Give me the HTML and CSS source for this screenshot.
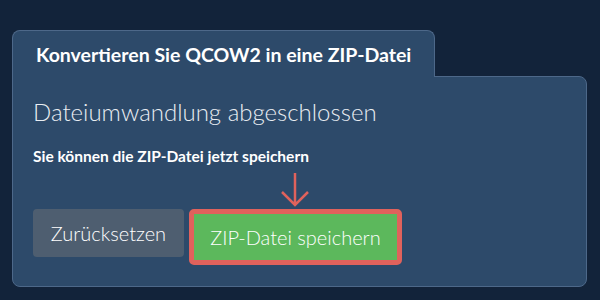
FILE: index.html
```html
<!DOCTYPE html>
<html lang="de">
<head>
    <meta charset="UTF-8">
    <title>QCOW2 zu ZIP</title>
    <link rel="stylesheet" href="styles.css">
</head>
<body>
<div class="box">
    <div class="tab">Konvertieren Sie QCOW2 in eine ZIP-Datei</div>
    <div class="panel">
        <h2 class="done">Dateiumwandlung abgeschlossen</h2>
        <p class="hint">Sie können die ZIP-Datei jetzt speichern</p>
        <div class="btns">
            <button class="btn reset">Zurücksetzen</button>
            <div class="save-wrap">
                <svg class="arrow" width="30" height="36" viewBox="0 0 30 36">
                    <path d="M15 1 V33 M2 20 L15 33 L28 20" fill="none" stroke="#e0625c" stroke-width="2.5"/>
                </svg>
                <button class="btn save">ZIP-Datei speichern</button>
            </div>
        </div>
    </div>
</div>
</body>
</html>
```

FILE: styles.css
```css
* {
    margin: 0;
    padding: 0;
    box-sizing: border-box;
}

body {
    width: 600px;
    height: 300px;
    background-color: #12233a;
    font-family: Lato, "Noto Sans", sans-serif;
    color: #fff;
    overflow: hidden;
}

.box {
    padding: 30px 13px 0 12px;
}

.tab {
    position: relative;
    z-index: 1;
    display: inline-block;
    height: 47px;
    margin-bottom: -1px;
    padding: 12px 23px 0;
    border: 1px solid #4d6889;
    border-bottom: none;
    border-radius: 8px 8px 0 0;
    background-color: #2d4a6a;
    font-size: 19.5px;
    font-weight: 700;
    line-height: 24px;
}

.panel {
    height: 211px;
    padding: 19px 20px 0;
    border: 1px solid #4d6889;
    border-radius: 0 8px 8px 8px;
    background-color: #2d4a6a;
}

.done {
    font-size: 24px;
    font-weight: 300;
    line-height: 32px;
    color: #e9edf2;
}

.hint {
    margin-top: 19px;
    font-size: 15.5px;
    font-weight: 700;
    line-height: 18px;
}

.btns {
    display: flex;
    align-items: flex-start;
    gap: 5px;
    margin-top: 44px;
}

.btn {
    border: none;
    font-family: Lato, "Noto Sans", sans-serif;
    font-size: 20px;
    font-weight: 300;
    color: #fff;
    cursor: pointer;
}

.reset {
    width: 151px;
    height: 48px;
    border-radius: 4px;
    background-color: #4e5e70;
}

.save-wrap {
    position: relative;
}

.save {
    width: 213px;
    height: 56px;
    border: 5px solid #e0625c;
    border-radius: 5px;
    background-color: #5cb85c;
}

.arrow {
    position: absolute;
    top: -37px;
    left: 91px;
}
```
